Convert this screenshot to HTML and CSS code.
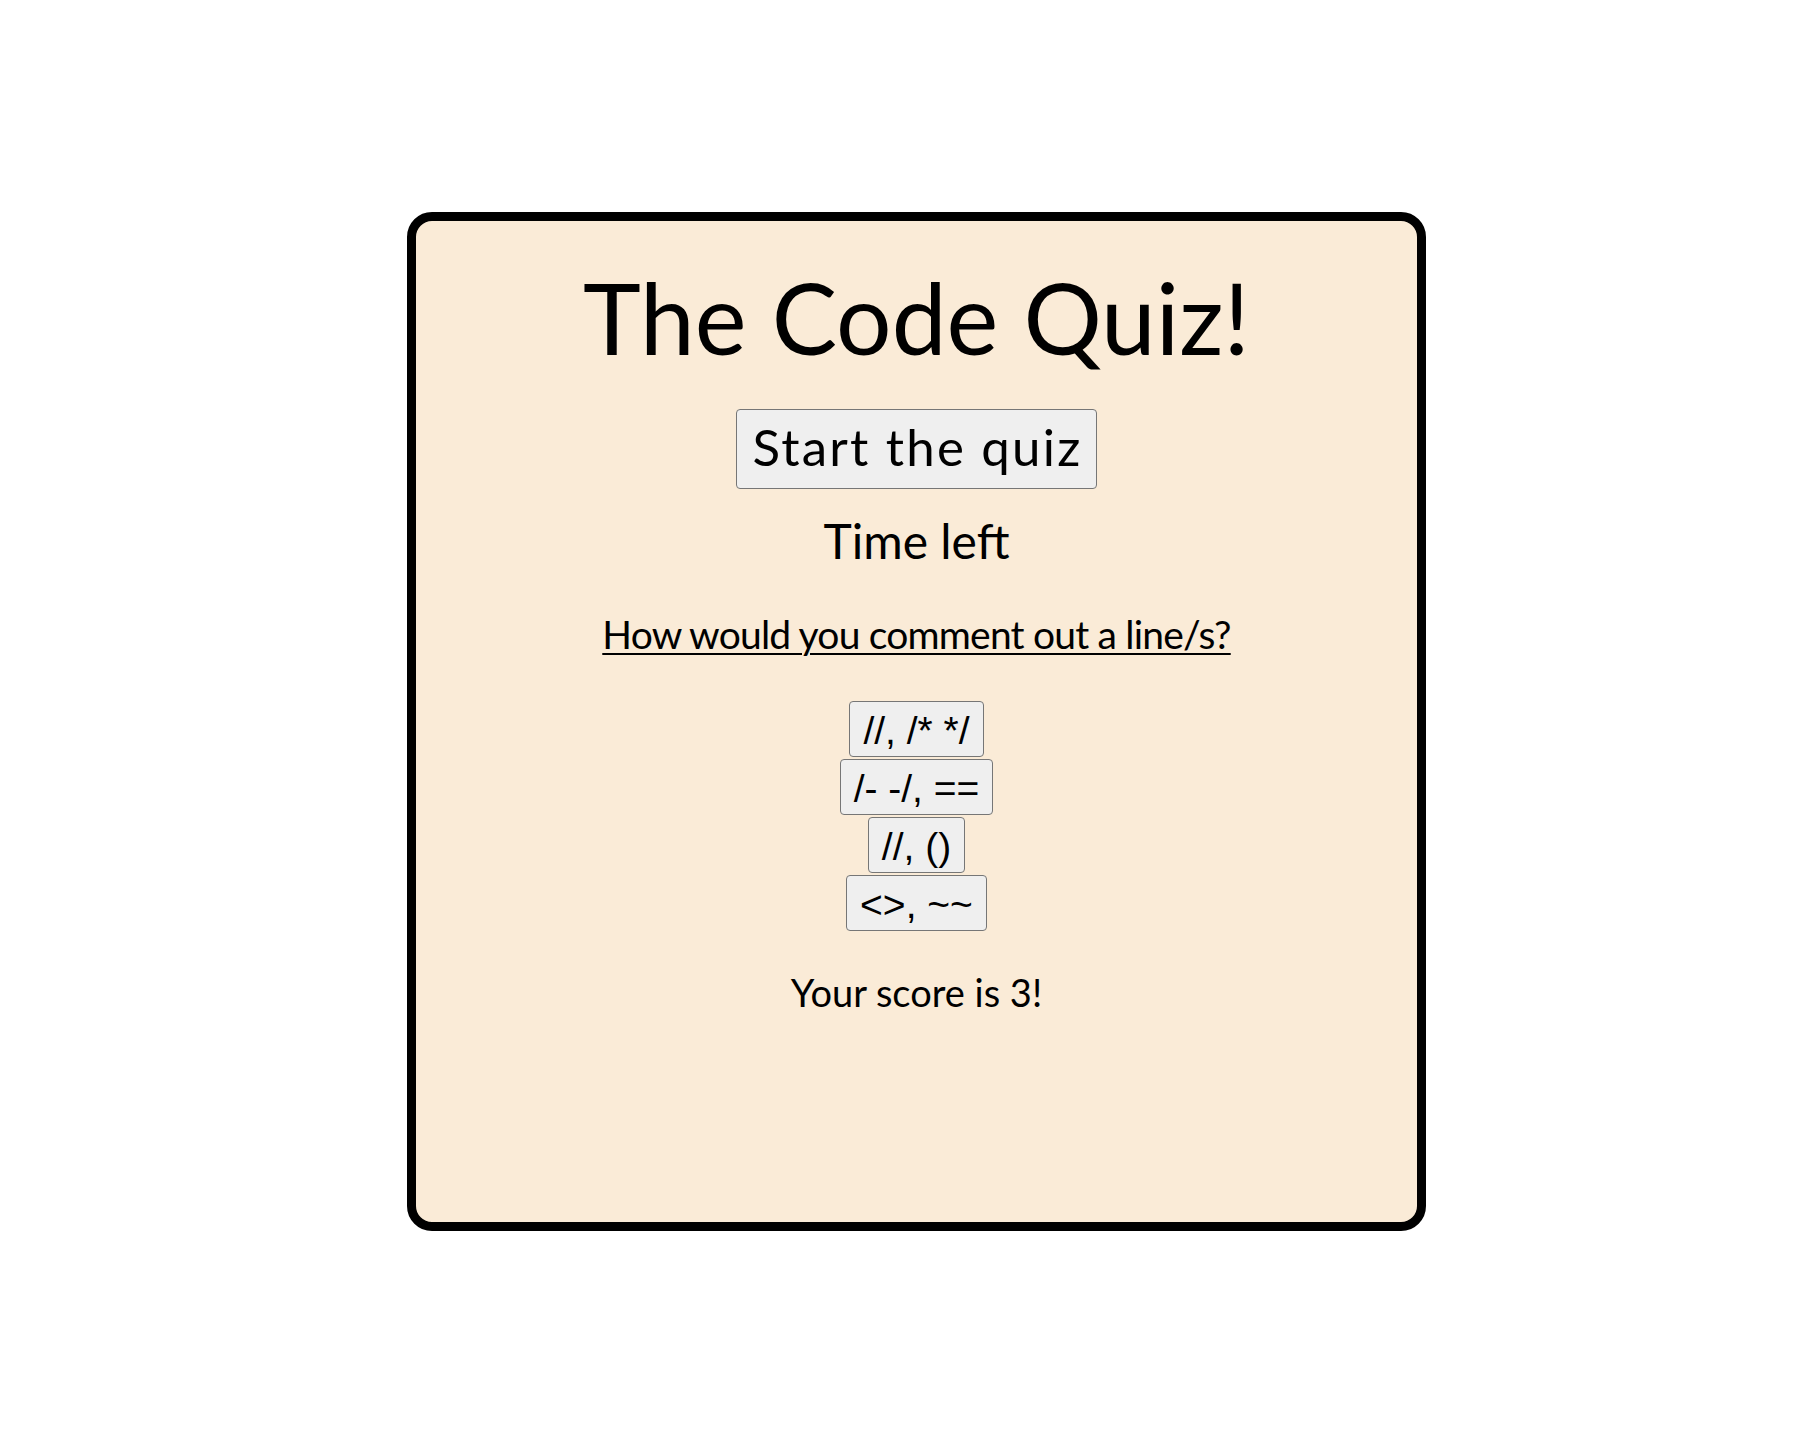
FILE: index.html
```html
<!DOCTYPE html>
<html lang="en">
<head>
<meta charset="utf-8">
<title>The Code Quiz!</title>
<link rel="stylesheet" href="styles.css">
</head>
<body>
<div class="page">
  <main class="card">
    <h1 class="title">The Code Quiz!</h1>
    <button class="start-btn" type="button">Start the quiz</button>
    <div class="timer">Time left</div>
    <h3 class="question">How would you comment out a line/s?</h3>
    <div class="answers">
      <button class="answer-btn" type="button">//, /* */</button>
      <button class="answer-btn" type="button">/- -/, ==</button>
      <button class="answer-btn" type="button">//, ()</button>
      <button class="answer-btn" type="button">&lt;&gt;, ~~</button>
    </div>
    <p class="score">Your score is 3!</p>
  </main>
</div>
</body>
</html>
```
FILE: styles.css
```css
html, body {
  margin: 0;
  padding: 0;
  background: #ffffff;
}

.page {
  padding-top: 212px;
}

.card {
  margin-left: 407px;
  width: 1001px;
  height: 1001px;
  border: 9px solid #000000;
  border-radius: 25px;
  background: #faebd7;
  display: flex;
  flex-direction: column;
  align-items: center;
  font-family: Lato, "Liberation Sans", sans-serif;
  color: #000000;
}

.title {
  margin: 37px 0 0;
  font-size: 98px;
  line-height: 118px;
  font-weight: 400;
}

.start-btn {
  margin-top: 33px;
  height: 80px;
  box-sizing: border-box;
  padding: 7px 14px 11px 16px;
  font-family: Lato, "Liberation Sans", sans-serif;
  font-size: 51px;
  line-height: 60px;
  letter-spacing: 2.2px;
  background: #efefef;
  border: 1px solid #767676;
  border-radius: 4px;
  color: #000000;
}

.timer {
  margin-top: 22px;
  font-size: 48px;
  line-height: 59px;
}

.question {
  margin: 41px 0 0;
  font-size: 39px;
  line-height: 47px;
  font-weight: 400;
  letter-spacing: -0.8px;
  text-decoration: underline;
  text-decoration-thickness: 2px;
  text-underline-offset: 4px;
}

.answers {
  margin-top: 43px;
  display: flex;
  flex-direction: column;
  align-items: center;
  gap: 2px;
}

.answer-btn {
  height: 56px;
  box-sizing: border-box;
  padding: 9px 13px 5px;
  font-family: "Liberation Sans", Arial, sans-serif;
  font-size: 39px;
  line-height: 40px;
  background: #efefef;
  border: 1px solid #767676;
  border-radius: 4px;
  color: #000000;
}

.score {
  margin: 38px 0 0;
  font-size: 38px;
  line-height: 46px;
}
```
